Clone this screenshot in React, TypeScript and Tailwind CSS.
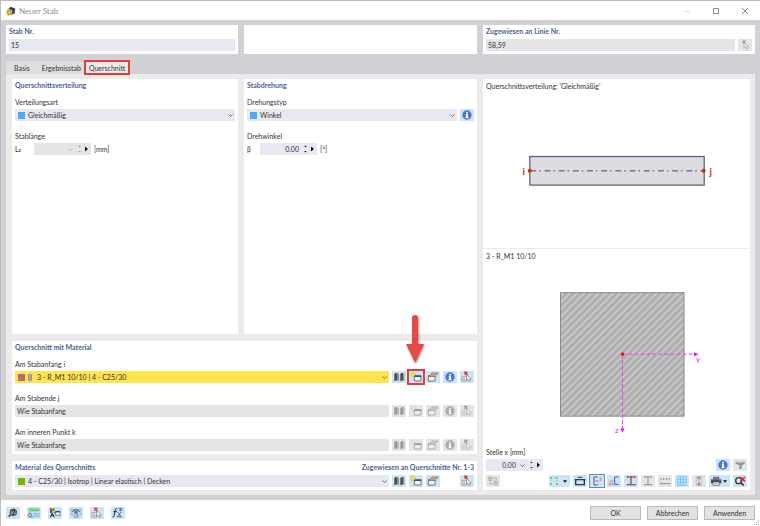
import type { ReactNode } from 'react'
import { clsx } from 'clsx'

type IconName =
  | 'library'
  | 'new'
  | 'edit'
  | 'info'
  | 'pick'
  | 'pickLine'
  | 'help'
  | 'units'
  | 'display'
  | 'view'
  | 'formula'
  | 'swap'
  | 'points'
  | 'dimension'
  | 'axes'
  | 'principal'
  | 'stress'
  | 'profile'
  | 'ruler'
  | 'grid'
  | 'layers'
  | 'print'
  | 'resetZoom'
  | 'filter'

// every icon is drawn on a 42 x 36 canvas
const icons: Record<IconName, ReactNode> = {
  library: (
    <>
      <path d="M7 8l8-3v23l-8 3zM25 8l8-3v23l-8 3z" fill="#4f4f4f" />
      <path d="M15 5l6 4v22l-6-3zM33 5l4 4v22l-4-3z" fill="#8f8f8f" />
    </>
  ),
  new: (
    <>
      <path d="M16 15h20v15H16z" fill="#f3f3f3" stroke="#70757f" strokeWidth="3" />
      <path d="M15 13h22v5H15z" fill="#3a4b97" />
      <path d="M12 2v17M4 10h17M6 5l12 11M18 5L6 16" stroke="#a5a32c" strokeWidth="2" />
      <circle cx="12" cy="10" r="6" fill="#f3ea1c" />
    </>
  ),
  edit: (
    <>
      <path d="M7 15h20v15H7z" fill="#f3f3f3" stroke="#70757f" strokeWidth="3" />
      <path d="M6 13h22v4H6z" fill="#5d6270" />
      <path d="M12 14l3-7 9-3 9 2v6l-9 2-6 3z" fill="#c99a78" />
      <path d="M14 9l7-4" stroke="#8f6a55" strokeWidth="2" fill="none" />
      <path d="M29 4h7v8h-7z" fill="#8495aa" />
    </>
  ),
  info: (
    <>
      <circle cx="21" cy="18" r="14" fill="#4673e3" />
      <circle cx="21" cy="11" r="3" fill="#fff" />
      <path d="M17 15h7v10h2v3h-10v-3h2v-7h-1z" fill="#fff" />
    </>
  ),
  pick: (
    <>
      <path d="M6 17h14v13H6z" fill="#f5f5f5" stroke="#858585" strokeWidth="2" />
      <path d="M9 22h7M9 26h7" stroke="#858585" strokeWidth="2" />
      <path d="M20 11v18l4-4 4 7 3-2-3-6h6z" fill="#fff" stroke="#777" strokeWidth="2" />
      <path d="M13 2l9 9M22 2l-9 9" stroke="#e0282e" strokeWidth="4" />
    </>
  ),
  pickLine: (
    <>
      <path d="M18 11v17l4-4 4 7 3-2-3-6h6z" fill="#fff" stroke="#555" strokeWidth="2" />
      <path d="M14 4l8 8M22 4l-8 8" stroke="#111" strokeWidth="3" />
    </>
  ),
  help: (
    <>
      <circle cx="22" cy="16" r="10" fill="#85898f" stroke="#454a50" strokeWidth="3" />
      <path d="M14 23l-6 6" stroke="#454a50" strokeWidth="5" />
      <path d="M18 13c0-5 9-5 8 0 0 3-4 3-4 6" stroke="#222" strokeWidth="3" fill="none" />
      <circle cx="22" cy="22" r="2" fill="#222" />
    </>
  ),
  units: (
    <>
      <path d="M5 4h33v9H5z" fill="#79d478" />
      <path d="M9 9v4M15 9v4M21 9v4M27 9v4M33 9v4" stroke="#4aa54a" strokeWidth="1" />
      <ellipse cx="9" cy="24" rx="4" ry="6" fill="none" stroke="#333" strokeWidth="2" />
      <path d="M15 29v3" stroke="#333" strokeWidth="3" />
      <ellipse cx="23" cy="24" rx="4" ry="6" fill="none" stroke="#54a3e0" strokeWidth="2" />
      <ellipse cx="33" cy="24" rx="4" ry="6" fill="none" stroke="#54a3e0" strokeWidth="2" />
    </>
  ),
  display: (
    <>
      <path d="M6 4h7v8H6z" fill="#f02323" />
      <path d="M13 4h7v8h-7z" fill="#31b531" />
      <path d="M6 12h7v6H6z" fill="#2c55da" />
      <path d="M13 12h7v6h-7z" fill="#f3c721" />
      <path d="M7 31l6-13 6 13M9 26h9M19 17h5" stroke="#222" strokeWidth="3" fill="none" />
      <path d="M23 14h13v11H23z" fill="#f8f8f8" stroke="#4d5263" strokeWidth="2" />
      <path d="M22 12h15v4H22z" fill="#38498b" />
    </>
  ),
  view: (
    <>
      <path d="M6 7h30v17H6z" fill="#c5d8ea" stroke="#8ea5bd" strokeWidth="2" />
      <path d="M10 15c5-9 17-9 22 0" fill="none" stroke="#5c7590" strokeWidth="4" />
      <circle cx="21" cy="16" r="5" fill="#417fb4" />
      <path d="M25 20v9M14 30h15" stroke="#7b90a5" strokeWidth="3" />
    </>
  ),
  formula: (
    <>
      <path d="M19 5c-5-2-6 2-7 8l-3 13c-1 5-3 5-5 4M7 14h11" fill="none" stroke="#1f2f50" strokeWidth="3" />
      <path d="M20 15l10 14M31 15L19 29M19 29h13" stroke="#1f2f50" strokeWidth="2" />
      <path d="M22 5h13M29 3v10M24 10h10" stroke="#2e4c9b" strokeWidth="2" />
    </>
  ),
  swap: (
    <>
      <path d="M8 6h10v10H8zM24 18h10v11H24z" fill="#eee" stroke="#444" strokeWidth="2" />
      <path d="M22 9h9v5M12 20v7h8" fill="none" stroke="#333" strokeWidth="2" />
      <path d="M11 11h4M27 23h4" stroke="#222" strokeWidth="3" />
    </>
  ),
  points: (
    <>
      <path d="M4 6h5v5H4zM20 6h5v5h-5zM4 24h5v5H4zM22 24h5v5h-5z" fill="#3ad63a" />
      <path d="M5 15h3v4H5zM12 7h3v3h-3zM22 15h3v4h-3z" fill="#85d985" />
    </>
  ),
  dimension: (
    <>
      <path d="M8 14h26v15H8z" fill="none" stroke="#2c3747" strokeWidth="4" />
      <path d="M14 7h14M5 14h7M30 14h7" stroke="#2c3747" strokeWidth="3" />
    </>
  ),
  axes: (
    <>
      <path d="M23 6H12v24h11" fill="none" stroke="#4b638d" strokeWidth="3" />
      <path d="M15 18h12M20 15v6" fill="none" stroke="#e0669a" strokeWidth="2" />
      <path d="M29 9h6l-6 7h6" fill="none" stroke="#e0669a" strokeWidth="2" />
      <path d="M22 25l5 6M27 25l-5 6" fill="none" stroke="#e0669a" strokeWidth="1" />
    </>
  ),
  principal: (
    <>
      <path d="M35 6H23v22h12" fill="none" stroke="#4b638d" strokeWidth="3" />
      <path d="M8 19h12M15 14v6" stroke="#e0669a" strokeWidth="2" />
      <circle cx="9" cy="27" r="3" fill="none" stroke="#d64b83" strokeWidth="2" />
      <path d="M15 31l5-7M15 24l5 7" stroke="#e0669a" strokeWidth="2" />
    </>
  ),
  stress: (
    <>
      <path d="M8 6h27M8 29h27M21 6v23" stroke="#50545b" strokeWidth="3" />
      <path d="M9 6h4M19 6h5M30 6h4M9 29h4M19 29h5M30 29h4M21 13v3M21 20v3" stroke="#e52c2c" strokeWidth="4" />
    </>
  ),
  profile: <path d="M9 6h25M9 29h25M21 6v23" stroke="#333" strokeWidth="3" />,
  ruler: (
    <>
      <path d="M6 26h31" stroke="#333" strokeWidth="3" />
      <path d="M9 9v6M17 9v6M25 9v6M33 9v6" stroke="#333" strokeWidth="3" />
    </>
  ),
  grid: (
    <>
      <path d="M8 5h26v26H8z" fill="#c6e8ff" />
      <path
        d="M8 5h26v26H8zM16.700 5v26M25.300 5v26M8 13.700h26M8 22.300h26"
        fill="none"
        stroke="#59b7fa"
        strokeWidth="2"
      />
    </>
  ),
  layers: (
    <>
      <path d="M14 6h14M14 30h14" stroke="#555" strokeWidth="3" />
      <path d="M13 5v26M29 5v26" stroke="#888" strokeWidth="2" />
      <path d="M21 5l-4 6h8zM21 31l-4-6h8zM21 10v16" fill="#333" stroke="#333" strokeWidth="2" />
    </>
  ),
  print: (
    <>
      <path d="M12 5h19v8H12z" fill="#777" />
      <path d="M6 13h31v12H6z" fill="#4b4f55" />
      <path d="M12 21h19v10H12z" fill="#f4f4f4" stroke="#4b4f55" strokeWidth="2" />
      <path d="M15 25h13M31 16h3" stroke="#999" strokeWidth="2" />
    </>
  ),
  resetZoom: (
    <>
      <circle cx="17" cy="17" r="9" fill="#dbe9f5" stroke="#30363d" strokeWidth="4" />
      <path d="M24 24l8 7" stroke="#30363d" strokeWidth="5" />
      <path d="M22 6l14 13M36 6L22 19" stroke="#f01f1f" strokeWidth="5" />
    </>
  ),
  filter: (
    <>
      <path d="M8 8h27v6l-9 5v11h-7V19L8 14z" fill="#444" />
      <path d="M10 10h20" stroke="#aaa" strokeWidth="3" />
    </>
  ),
}

function Icon({ name }: { name: IconName }) {
  return (
    <svg viewBox="0 0 42 36" className="h-3 w-[14px] shrink-0" aria-hidden="true">
      {icons[name]}
    </svg>
  )
}

interface IconButtonProps {
  icon: IconName
  label: string
  disabled?: boolean
  active?: boolean
  menu?: boolean
  children?: ReactNode
}

function IconButton({ icon, label, disabled, active, menu, children }: IconButtonProps) {
  return (
    <button
      type="button"
      aria-label={label}
      disabled={disabled}
      className={clsx(
        'relative flex h-3 shrink-0 items-center',
        menu ? 'w-[21px]' : 'w-[14px]',
        disabled ? 'bg-[#e5e5e5]' : 'bg-[#cce4f7]',
        active && 'outline outline-1 outline-[#5f8fb8]'
      )}
    >
      <span className={clsx('flex', disabled && 'opacity-50 grayscale')}>
        <Icon name={icon} />
      </span>
      {menu && (
        <svg viewBox="0 0 6 4" className="h-[3px] w-1" aria-hidden="true">
          <path d="M0 0h6L3 4z" fill="#111" />
        </svg>
      )}
      {children}
    </button>
  )
}

function Chevron({ dim }: { dim?: boolean }) {
  return (
    <svg viewBox="0 0 10 6" className="pointer-events-none h-[3px] w-[5px] shrink-0" aria-hidden="true">
      <path d="M1 1l4 4 4-4" fill="none" stroke={dim ? '#aaa' : '#444'} strokeWidth="1.500" />
    </svg>
  )
}

function Heading({ children }: { children: ReactNode }) {
  return <h2 className="h-2.5 whitespace-nowrap font-bold text-[#4a5f94]">{children}</h2>
}

interface SelectFieldProps {
  id: string
  value: string
  swatch?: ReactNode
  disabled?: boolean
  highlight?: boolean
  label?: string
}

function SelectField({ id, value, swatch, disabled, highlight, label }: SelectFieldProps) {
  return (
    <div
      className={clsx(
        'flex h-3 min-w-0 flex-1 items-center gap-[3px] px-0.5',
        disabled ? 'bg-[#e5e5e5]' : highlight ? 'bg-[#ffe34f]' : 'bg-[#e8e8f3]'
      )}
    >
      {swatch}
      <select
        id={id}
        aria-label={label}
        disabled={disabled}
        className="h-3 min-w-0 flex-1 appearance-none bg-transparent leading-3 outline-none disabled:opacity-100"
      >
        <option>{value}</option>
      </select>
      {!disabled && <Chevron />}
    </div>
  )
}

interface NumberFieldProps {
  id: string
  value: string
  disabled?: boolean
  dropdown?: boolean
}

function NumberField({ id, value, disabled, dropdown }: NumberFieldProps) {
  return (
    <div
      className={clsx(
        'flex h-3 w-[57px] items-center gap-1 pr-0.5',
        disabled ? 'bg-[#e5e5e5]' : 'bg-[#e8e8f3]'
      )}
    >
      <input
        id={id}
        defaultValue={value}
        disabled={disabled}
        className="h-3 min-w-0 flex-1 bg-transparent text-right outline-none"
      />
      {dropdown && <Chevron dim={disabled} />}
      <svg viewBox="0 0 12 8" className="h-2 w-3 shrink-0" aria-hidden="true">
        <path d="M1 2l1.500-1.500L4 2zM1 6l1.500 1.500L4 6z" fill={disabled ? '#999' : '#333'} />
        <path d="M8 1.500v5L11 4z" fill="#111" />
      </svg>
    </div>
  )
}

function Swatch({ className }: { className: string }) {
  return <span className={clsx('ml-px h-[7px] w-[7px] shrink-0', className)} />
}

function SectionTools({ disabled, arrow }: { disabled?: boolean; arrow?: boolean }) {
  return (
    <div className="flex gap-[3px]">
      <IconButton icon="library" label="Bibliothek" disabled={disabled} />
      <IconButton icon="new" label="Neu" disabled={disabled}>
        {arrow && (
          <>
            <span className="absolute -inset-x-0.5 -inset-y-0.5 border-2 border-[#ea3a36]" />
            <svg
              viewBox="0 0 20 50"
              className="absolute bottom-[19px] -left-1 h-[50px] w-5 drop-shadow-[1px_1px_1px_rgba(0,0,0,0.4)]"
              aria-hidden="true"
            >
              <path d="M7 4q0-3 3-3t3 3v26h6l-9 19L1 30h6z" fill="#ea4843" />
            </svg>
          </>
        )}
      </IconButton>
      <IconButton icon="edit" label="Bearbeiten" disabled={disabled} />
      <IconButton icon="info" label="Info" disabled={disabled} />
      <IconButton icon="pick" label="Auswählen" disabled={disabled} />
    </div>
  )
}

function TitleBar() {
  return (
    <header className="flex h-5 items-center border-t border-[#bcbcbc] bg-white pl-[5px] text-[#8f8f8f]">
      <svg viewBox="0 0 30 30" className="h-2.5 w-2.5" aria-hidden="true">
        <path d="M7 8l8-6 13 6-3 15-9 4z" fill="#365a87" />
        <path d="M12 5l14 5-5 4 5 8" fill="none" stroke="#17304f" strokeWidth="3" />
        <path d="M2 12l7-4 4 3 5 1 1 9-4 7-9 1-5-7z" fill="#e3b22c" />
        <circle cx="10" cy="19" r="4" fill="#fff1a4" stroke="#8d6b14" strokeWidth="2" />
      </svg>
      <h1 className="ml-[3px] flex-1 text-[8px]">Neuer Stab</h1>
      <button type="button" aria-label="Minimieren" className="flex w-[29px] justify-center">
        <svg viewBox="0 0 8 8" className="h-2 w-2" aria-hidden="true">
          <path d="M1 4.500h6" stroke="#ddd" />
        </svg>
      </button>
      <button type="button" aria-label="Maximieren" className="flex w-[29px] justify-center">
        <svg viewBox="0 0 8 8" className="h-2 w-2" aria-hidden="true">
          <path d="M1.500 1.500h5v5h-5z" fill="none" stroke="#8c8c8c" />
        </svg>
      </button>
      <button type="button" aria-label="Schließen" className="flex w-[30px] justify-center">
        <svg viewBox="0 0 8 8" className="h-2 w-2" aria-hidden="true">
          <path d="M1 1l6 6M7 1L1 7" stroke="#8c8c8c" />
        </svg>
      </button>
    </header>
  )
}

function MemberDrawing() {
  return (
    <svg viewBox="0 0 267 159" className="min-h-0 w-full flex-1" role="img" aria-label="Stab">
      <rect x="45.500" y="66.500" width="177" height="29" fill="#dcdce1" stroke="#62627a" strokeWidth="1.300" />
      <path d="M46 81h175" stroke="#777790" strokeWidth="1.500" strokeDasharray="6 3 1.500 3.900" />
      <circle cx="45.500" cy="81" r="2" fill="#d02b06" />
      <circle cx="222" cy="81" r="2" fill="#d02b06" />
      <text x="38" y="85" fontSize="10" fontWeight="700" fill="#d02b06">
        i
      </text>
      <text x="228" y="85" fontSize="10" fontWeight="700" fill="#d02b06">
        j
      </text>
    </svg>
  )
}

function SectionDrawing() {
  return (
    <svg viewBox="0 0 267 186" className="min-h-0 w-full flex-1" role="img" aria-label="Querschnitt">
      <defs>
        <pattern id="hatch" width="5.100" height="5.100" patternUnits="userSpaceOnUse" patternTransform="rotate(45)">
          <rect width="5.100" height="5.100" fill="#b0b0b0" />
          <path d="M2.500 0v5.100" stroke="#dadada" strokeWidth="1.100" />
        </pattern>
      </defs>
      <rect x="77.500" y="31.500" width="123.500" height="123.500" fill="url(#hatch)" stroke="#8a8a8a" />
      <path d="M139.500 93h71M139.500 93v74" stroke="#f23cf2" strokeDasharray="4 2" />
      <path d="M211 91l4.500 2-4.500 2zM137.500 167l2 4.500 2-4.500z" fill="#f0f" />
      <rect x="138" y="91.500" width="3" height="3" fill="#f00d0d" />
      <text x="213" y="101" fontSize="8" fill="#f0f">
        y
      </text>
      <text x="132" y="172" fontSize="8" fill="#f0f">
        z
      </text>
    </svg>
  )
}

const tabs = ['Basis', 'Ergebnisstab', 'Querschnitt']

const viewTools: IconButtonProps[] = [
  { icon: 'points', label: 'Punkte', menu: true },
  { icon: 'dimension', label: 'Bemaßung' },
  { icon: 'axes', label: 'Achsen', active: true },
  { icon: 'principal', label: 'Hauptachsen' },
  { icon: 'stress', label: 'Spannungspunkte' },
  { icon: 'profile', label: 'Profil', disabled: true },
  { icon: 'ruler', label: 'Maßstab', disabled: true },
  { icon: 'grid', label: 'Raster' },
  { icon: 'layers', label: 'Schichten', disabled: true },
  { icon: 'print', label: 'Drucken', menu: true },
  { icon: 'resetZoom', label: 'Zoom zurücksetzen' },
]

const footerTools: IconButtonProps[] = [
  { icon: 'help', label: 'Hilfe' },
  { icon: 'units', label: 'Einheiten' },
  { icon: 'display', label: 'Anzeige' },
  { icon: 'view', label: 'Ansicht' },
  { icon: 'pick', label: 'Auswählen' },
  { icon: 'formula', label: 'Formel' },
]

export default function App() {
  return (
    <div className="flex min-h-screen flex-col border-l border-[#bcbcbc] bg-[#d0d0d5] font-['Lato','Open_Sans',sans-serif] text-[7px] leading-[10px] text-[#333]">
      <TitleBar />

      <div className="grid grid-cols-[232fr_233fr_272fr] gap-1.5 pt-[5px] pr-[5px] pl-[5px]">
        <section className="bg-white px-[3px] pt-px pb-[3px]">
          <Heading>
            <label htmlFor="member-no">Stab Nr.</label>
          </Heading>
          <input id="member-no" defaultValue="15" className="mt-[3px] block h-3 w-full bg-[#e8e8f3] px-0.5 outline-none" />
        </section>
        <section className="bg-white" />
        <section className="bg-white px-[3px] pt-px pb-[3px]">
          <Heading>
            <label htmlFor="line-no">Zugewiesen an Linie Nr.</label>
          </Heading>
          <div className="mt-[3px] flex gap-[3px]">
            <input
              id="line-no"
              defaultValue="58,59"
              readOnly
              className="h-3 min-w-0 flex-1 bg-[#e5e5e5] px-0.5 outline-none"
            />
            <IconButton icon="pickLine" label="Linie auswählen" disabled />
          </div>
        </section>
      </div>

      <nav className="mt-[7px] flex h-[13px] pl-[5px]" role="tablist">
        {tabs.map((tab) => {
          const selected = tab === 'Querschnitt'
          return (
            <button
              key={tab}
              type="button"
              role="tab"
              aria-selected={selected}
              className={clsx('relative', selected ? 'bg-[#ebebeb] px-1' : 'bg-[#dedee0] px-1 first:px-2')}
            >
              {tab}
              {selected && <span className="absolute -inset-x-px -inset-y-px border-2 border-[#ea3a36]" />}
            </button>
          )
        })}
      </nav>

      <main className="mr-[5px] mb-[5px] ml-[5px] grid flex-1 grid-cols-[465fr_267fr] gap-1.5 bg-[#ebebeb] py-[5px] pr-[5px] pl-1.5">
        <div className="flex min-w-0 flex-col gap-[7px]">
          <div className="grid flex-1 grid-cols-[226fr_233fr] gap-1.5">
            <section className="bg-white px-[3px] pt-px">
              <Heading>Querschnittsverteilung</Heading>
              <label htmlFor="distribution" className="mt-[7px] block">
                Verteilungsart
              </label>
              <div className="mt-0.5 flex">
                <SelectField id="distribution" value="Gleichmäßig" swatch={<Swatch className="bg-[#4da6ff]" />} />
              </div>
              <label htmlFor="length" className="mt-2.5 block">
                Stablänge
              </label>
              <div className="mt-0.5 flex items-center">
                <span className="w-[19px]">
                  L<small className="text-[6px]">z</small>
                </span>
                <NumberField id="length" value="" disabled dropdown />
                <span className="ml-[3px]">[mm]</span>
              </div>
            </section>

            <section className="bg-white px-[3px] pt-px">
              <Heading>Stabdrehung</Heading>
              <label htmlFor="rotation" className="mt-[7px] block">
                Drehungstyp
              </label>
              <div className="mt-0.5 flex gap-[3px]">
                <SelectField id="rotation" value="Winkel" swatch={<Swatch className="bg-[#4da6ff]" />} />
                <IconButton icon="info" label="Info" />
              </div>
              <label htmlFor="angle" className="mt-2.5 block">
                Drehwinkel
              </label>
              <div className="mt-0.5 flex items-center">
                <span className="w-[13px]">β</span>
                <NumberField id="angle" value="0.00" />
                <span className="ml-[3px]">[°]</span>
              </div>
            </section>
          </div>

          <section className="bg-white px-[3px] pt-px pb-[3px]">
            <Heading>Querschnitt mit Material</Heading>
            <label htmlFor="start-i" className="mt-[7px] block">
              Am Stabanfang i
            </label>
            <div className="mt-0.5 flex gap-[3px]">
              <SelectField
                id="start-i"
                value="3 - R_M1 10/10 | 4 - C25/30"
                highlight
                swatch={
                  <>
                    <Swatch className="bg-[#bf6a6a]" />
                    <span className="mr-0.5 h-[7px] w-1 shrink-0 rounded-[1px] border border-[#8b93a0] bg-[#aab0b8]" />
                  </>
                }
              />
              <SectionTools arrow />
            </div>
            <label htmlFor="end-j" className="mt-2.5 block">
              Am Stabende j
            </label>
            <div className="mt-0.5 flex gap-[3px]">
              <SelectField id="end-j" value="Wie Stabanfang" disabled />
              <SectionTools disabled />
            </div>
            <label htmlFor="inner-k" className="mt-2.5 block">
              Am inneren Punkt k
            </label>
            <div className="mt-0.5 flex gap-[3px]">
              <SelectField id="inner-k" value="Wie Stabanfang" disabled />
              <SectionTools disabled />
            </div>
          </section>

          <section className="bg-white px-[3px] pt-px pb-[3px]">
            <div className="flex justify-between">
              <Heading>Material des Querschnitts</Heading>
              <Heading>Zugewiesen an Querschnitte Nr. 1-3</Heading>
            </div>
            <div className="mt-[3px] flex gap-[3px]">
              <SelectField
                id="material"
                label="Material des Querschnitts"
                value="4 - C25/30 | Isotrop | Linear elastisch | Decken"
                swatch={<Swatch className="bg-[#72b800]" />}
              />
              <IconButton icon="library" label="Bibliothek" />
              <IconButton icon="new" label="Neu" />
              <IconButton icon="edit" label="Bearbeiten" />
              <span className="w-[14px]" />
              <IconButton icon="pick" label="Auswählen" />
            </div>
          </section>
        </div>

        <aside className="flex min-w-0 flex-col bg-white">
          <div className="flex min-h-0 flex-[170_1_0px] flex-col border-b border-[#ebebeb] pt-0.5">
            <p className="px-[3px]">Querschnittsverteilung: 'Gleichmäßig'</p>
            <MemberDrawing />
          </div>
          <div className="flex min-h-0 flex-[241_1_0px] flex-col pt-0.5 pb-[3px]">
            <p className="px-[3px]">3 - R_M1 10/10</p>
            <SectionDrawing />
            <div className="px-[3px]">
              <label htmlFor="position-x" className="block">
                Stelle x [mm]
              </label>
              <div className="mt-0.5 flex gap-[3px]">
                <NumberField id="position-x" value="0.00" dropdown />
                <span className="flex-1" />
                <IconButton icon="info" label="Info" />
                <IconButton icon="filter" label="Filter" disabled />
              </div>
              <div className="mt-1 flex gap-[3px]">
                <IconButton icon="swap" label="Tauschen" disabled />
                <span className="flex-1" />
                {viewTools.map((tool) => (
                  <IconButton key={tool.icon} {...tool} />
                ))}
              </div>
            </div>
          </div>
        </aside>
      </main>

      <footer className="relative flex h-[26px] items-center gap-[7px] bg-white pr-[5px] pl-[5px]">
        {footerTools.map((tool) => (
          <IconButton key={tool.icon} {...tool} />
        ))}
        <div className="ml-auto flex gap-1.5">
          {['OK', 'Abbrechen', 'Anwenden'].map((name) => (
            <button key={name} type="button" className="h-[14px] w-[51px] border border-[#b9b9b9] bg-[#e2e2e2]">
              {name}
            </button>
          ))}
        </div>
        <svg viewBox="0 0 6 6" className="absolute right-0 bottom-0 h-1.5 w-1.5" aria-hidden="true">
          <path d="M4 0h1v1H4zM2 2h1v1H2zM4 2h1v1H4zM0 4h1v1H0zM2 4h1v1H2zM4 4h1v1H4z" fill="#aaa" />
        </svg>
      </footer>
    </div>
  )
}
